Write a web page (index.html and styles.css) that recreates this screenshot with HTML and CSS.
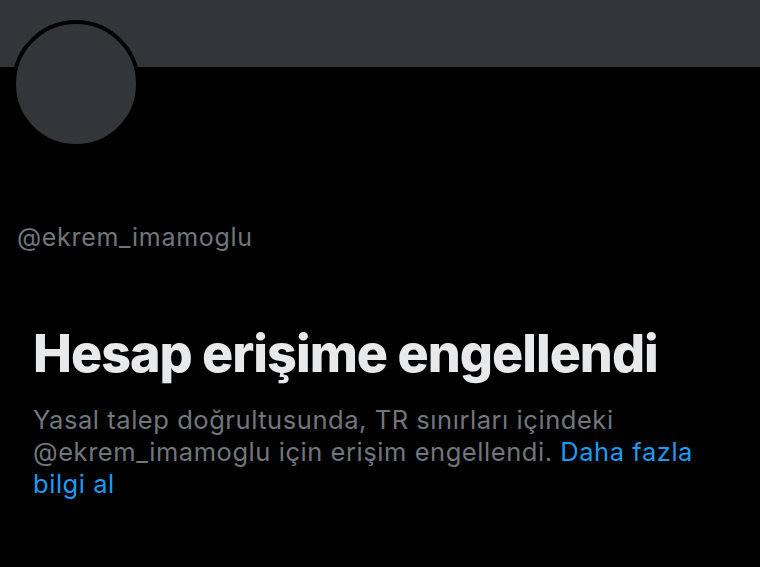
FILE: index.html
```html
<!DOCTYPE html>
<html lang="tr">

<head>
    <meta charset="UTF-8">
    <meta name="viewport" content="width=device-width, initial-scale=1.0">
    <title>@ekrem_imamoglu</title>
    <link rel="stylesheet" href="styles.css">
</head>

<body>
    <section class="profile">
        <div class="banner"></div>
        <div class="avatar-row">
            <div class="avatar"></div>
        </div>
        <p class="handle">@ekrem_imamoglu</p>
        <div class="notice">
            <h1>Hesap erişime engellendi</h1>
            <p>Yasal talep doğrultusunda, TR sınırları içindeki @ekrem_imamoglu için erişim engellendi. <a href="#">Daha fazla bilgi al</a></p>
        </div>
    </section>
</body>

</html>
```

FILE: styles.css
```css
* {
    margin: 0;
    padding: 0;
    box-sizing: border-box;
}

body {
    background: #000;
    font-family: Inter, Roboto, "Noto Sans", sans-serif;
    width: 760px;
    height: 567px;
    overflow: hidden;
}

.banner {
    height: 67px;
    background: #333639;
}

.avatar-row {
    height: 80px;
    padding-left: 12px;
}

.avatar {
    position: relative;
    top: -47px;
    width: 128px;
    height: 128px;
    border-radius: 50%;
    background: #333639;
    border: 4px solid #000;
}

.handle {
    padding-left: 17px;
    margin-top: 75px;
    font-size: 25px;
    line-height: 30px;
    letter-spacing: 0.7px;
    color: #71767b;
}

.notice {
    padding: 0 33px;
    margin-top: 72px;
}

.notice h1 {
    font-size: 52px;
    font-weight: 800;
    color: #e7e9ea;
    line-height: 60px;
    letter-spacing: -1px;
}

.notice p {
    margin-top: 20px;
    font-size: 25.5px;
    line-height: 32px;
    letter-spacing: 0.55px;
    color: #71767b;
    max-width: 700px;
}

.notice a {
    color: #1d9bf0;
    text-decoration: none;
}
```
